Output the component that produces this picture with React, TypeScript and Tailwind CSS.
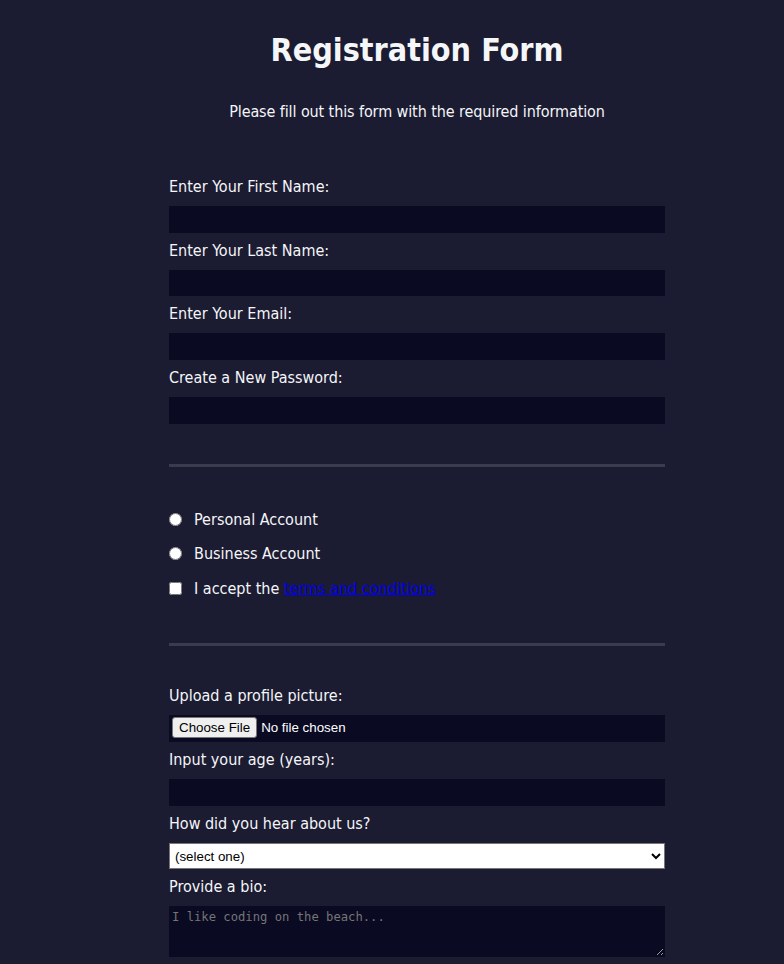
const campos = [
  { id: 'first-name', texto: 'Enter Your First Name:', tipo: 'text' },
  { id: 'last-name', texto: 'Enter Your Last Name:', tipo: 'text' },
  { id: 'email', texto: 'Enter Your Email:', tipo: 'email' },
  { id: 'new-password', texto: 'Create a New Password:', tipo: 'password' },
] as const

const cuentas = [
  { id: 'personal-account', texto: 'Personal Account' },
  { id: 'business-account', texto: 'Business Account' },
] as const

const inputOscuro =
  'mt-[10px] block h-[26.67px] w-full border border-[#0a0a23] bg-[#0a0a23] px-[2px] text-[13.33px] text-white outline-none'

export default function App() {
  return (
    <div className="min-h-screen w-full overflow-hidden bg-[#1b1b32] text-[16px] leading-[19.33px] text-[#f5f6f7] [font-family:'DejaVu_Sans_Condensed','DejaVu_Sans',sans-serif]">
      <div className="w-[834px] pb-8">
        <h1 className="pt-8 text-center text-[32px] font-bold leading-[37.6px]">Registration Form</h1>
        <p className="mt-8 text-center tracking-[-0.1px]">Please fill out this form with the required information</p>

        <form className="mx-auto mt-4 w-[500px] pb-8">
          <div className="mx-[2px] border-b-[3px] border-[#3b3b4f] py-8">
            <div className="flex flex-col gap-2 py-2">
              {campos.map(({ id, texto, tipo }) => (
                <label key={id} htmlFor={id} className="block">
                  <span className="block h-[19px]">{texto}</span>
                  <input id={id} type={tipo} className={inputOscuro} />
                </label>
              ))}
            </div>
          </div>

          <div className="mx-[2px] border-b-[3px] border-[#3b3b4f] py-8">
            <div className="flex flex-col gap-2 pt-2 pb-[10px]">
              {cuentas.map(({ id, texto }) => (
                <label key={id} htmlFor={id} className="flex h-[26.3px] items-center">
                  <input id={id} type="radio" name="account-type" className="m-0 h-[13px] w-[13px]" />
                  <span className="ml-[12px]">{texto}</span>
                </label>
              ))}
              <label htmlFor="terms-and-conditions" className="flex h-[26.3px] items-center">
                <input id="terms-and-conditions" type="checkbox" className="m-0 h-[13px] w-[13px]" />
                <span className="ml-[12px]">
                  I accept the{' '}
                  <a href="#terms" className="text-[#0000ee] underline">
                    terms and conditions
                  </a>
                </span>
              </label>
            </div>
          </div>

          <div className="mx-[2px] py-8">
            <div className="flex flex-col gap-2 py-2">
              <label htmlFor="profile-picture" className="block">
                <span className="block h-[19px]">Upload a profile picture:</span>
                <input
                  id="profile-picture"
                  type="file"
                  className="mt-[10px] block h-[26.67px] w-full border border-[#0a0a23] bg-[#0a0a23] px-[2px] pt-[1px] pb-0 text-[13.33px] leading-[15px] text-white [font-family:'Liberation_Sans',Arial,sans-serif] file:mr-[4px] file:rounded-[3px] file:border file:border-solid file:border-[#767676] file:bg-[#efefef] file:px-[6px] file:py-[2px] file:text-black"
                />
              </label>
              <label htmlFor="age" className="block">
                <span className="block h-[19px]">Input your age (years):</span>
                <input id="age" type="number" min={13} max={120} className={inputOscuro} />
              </label>
              <label htmlFor="referrer" className="block">
                <span className="block h-[19px]">How did you hear about us?</span>
                <select
                  id="referrer"
                  defaultValue=""
                  className="mt-[10px] block h-[26.67px] w-full border border-[#767676] bg-white px-[1px] text-[13.33px] text-black [font-family:'Liberation_Sans',Arial,sans-serif]"
                >
                  <option value="">(select one)</option>
                  <option value="1">freeCodeCamp News</option>
                  <option value="2">freeCodeCamp YouTube Channel</option>
                  <option value="3">freeCodeCamp Forum</option>
                  <option value="4">Other</option>
                </select>
              </label>
              <label htmlFor="bio" className="block">
                <span className="block h-[19px]">Provide a bio:</span>
                <textarea
                  id="bio"
                  rows={3}
                  placeholder="I like coding on the beach..."
                  className="mt-[10px] block h-[51px] w-full border border-[#0a0a23] bg-[#0a0a23] px-[2px] pt-[3px] text-[12.2px] leading-[15px] text-white outline-none [font-family:'DejaVu_Sans_Mono',monospace] placeholder:text-[#757575]"
                />
              </label>
            </div>
          </div>
        </form>
      </div>
    </div>
  )
}
